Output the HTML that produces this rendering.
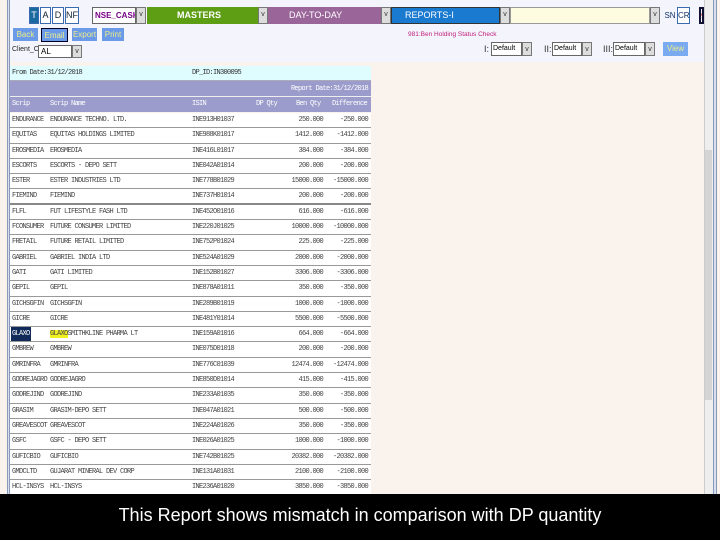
<!DOCTYPE html>
<html><head><meta charset="utf-8"><style>
*{margin:0;padding:0;box-sizing:border-box}
body{width:720px;height:540px;overflow:hidden;background:#faf2ec;position:relative;font-family:"Liberation Sans",sans-serif}
.abs{position:absolute}
.top{left:10px;top:0;width:694px;height:62px;background:#f4f4fc}
.lb{left:7px;top:0;width:3px;height:494px;border-left:1px solid #8898b8;border-right:1px solid #8898b8;background:#d8e0f0}
.rb{left:713px;top:0;width:4px;height:494px;border-left:1px solid #8898b8;border-right:1px solid #8898b8;background:#d8e0f0}
.sb{left:704px;top:0;width:9px;height:494px;background:#eeeeee;border-left:1px solid #ccc}
.thumb{left:705px;top:150px;width:7px;height:250px;background:#d4d4d4}
.t{font-family:"Liberation Sans Narrow","Liberation Sans",sans-serif;font-size:9px;line-height:15px;text-align:center;border:1px solid #3a6ab0;color:#123}
.sel{background:#fff;border:1px solid #666;font-size:9px;line-height:15px;font-family:"Liberation Sans Narrow","Liberation Sans",sans-serif;overflow:hidden;white-space:nowrap}
.arr{background:#ddd;border:1px solid #777;font-size:7px;text-align:center;line-height:14px;color:#333}
.btn{background:#6a9ae8;color:#ee8;font-size:8px;line-height:13px;text-align:center;font-family:"Liberation Sans Narrow",sans-serif}
.tb{left:10px;top:66px;width:361px;font-family:"Liberation Mono",monospace;font-size:7px;letter-spacing:-0.7px;color:#333}
.row{position:relative;width:361px;height:15.3px;border-bottom:1px solid #999;background:#fff;line-height:14px}
.row span{position:absolute;white-space:nowrap}
.cap{left:0;top:494px;width:720px;height:46px;background:#000;color:#fff;font-size:18px;text-align:center;line-height:42px}
</style></head><body>
<div class="abs top"></div>
<div class="abs lb"></div>
<div class="abs sb"></div><div class="abs thumb"></div>
<div class="abs rb"></div>

<div class="abs t" style="left:29px;top:7px;width:10px;height:17px;background:#1a6aa0;color:#fff">T</div>
<div class="abs t" style="left:40px;top:7px;width:11px;height:17px;background:#fff">A</div>
<div class="abs t" style="left:52px;top:7px;width:12px;height:17px;background:#fff">D</div>
<div class="abs t" style="left:65px;top:7px;width:14px;height:17px;background:#fff">NF</div>
<div class="abs sel" style="left:92px;top:7px;width:44px;height:17px;color:#708;padding-left:2px;font-size:8px;font-weight:bold">NSE_CASH</div>
<div class="abs arr" style="left:136px;top:7px;width:10px;height:17px">v</div>
<div class="abs" style="left:147px;top:7px;width:111px;height:17px;background:#5e9e14;color:#fff;font-size:9px;line-height:17px;padding-left:30px;font-weight:bold">MASTERS</div>
<div class="abs arr" style="left:258px;top:7px;width:10px;height:17px">v</div>
<div class="abs" style="left:268px;top:7px;width:113px;height:17px;background:#9a669a;color:#fff;font-size:9px;line-height:17px;padding-left:21px">DAY-TO-DAY</div>
<div class="abs arr" style="left:381px;top:7px;width:10px;height:17px">v</div>
<div class="abs" style="left:391px;top:7px;width:109px;height:17px;background:#1a7ad0;color:#fff;font-size:9px;line-height:15px;padding-left:13px;border:1px solid #333">REPORTS-I</div>
<div class="abs arr" style="left:500px;top:7px;width:10px;height:17px">v</div>
<div class="abs" style="left:510px;top:7px;width:140px;height:17px;background:#fdfce0;border:1px solid #999"></div>
<div class="abs arr" style="left:650px;top:7px;width:10px;height:17px">v</div>
<div class="abs t" style="left:664px;top:8px;width:12px;height:16px;border:none;background:none;color:#136;font-size:8px">SN</div>
<div class="abs t" style="left:677px;top:7px;width:13px;height:17px;background:#fff;color:#136;font-size:8px">CR</div>
<div class="abs t" style="left:699px;top:7px;width:5px;height:17px;background:#fff;border:2px solid #113;color:#c00;overflow:hidden">9</div>

<div class="abs btn" style="left:13px;top:28px;width:25px;height:13px">Back</div>
<div class="abs btn" style="left:41px;top:28px;width:27px;height:14px;border:1px solid #002">Email</div>
<div class="abs btn" style="left:72px;top:28px;width:25px;height:13px">Export</div>
<div class="abs btn" style="left:102px;top:28px;width:22px;height:13px">Print</div>
<div class="abs" style="left:12px;top:46px;font-size:7px;color:#222;font-family:'Liberation Sans Narrow',sans-serif">Client_C:</div>
<div class="abs sel" style="left:38px;top:45px;width:34px;height:13px;line-height:11px;padding-left:2px;font-size:8px">AL</div>
<div class="abs arr" style="left:72px;top:45px;width:10px;height:13px;line-height:11px">v</div>

<div class="abs" style="left:408px;top:31px;font-size:6.5px;color:#c0207a">981:Ben Holding Status Check</div>
<div class="abs" style="left:484px;top:44px;font-size:9px;color:#333">I:</div>
<div class="abs sel" style="left:491px;top:42px;width:31px;height:14px;line-height:12px;font-size:7px;padding-left:1px">Default</div>
<div class="abs arr" style="left:522px;top:42px;width:10px;height:14px">v</div>
<div class="abs" style="left:544px;top:44px;font-size:9px;color:#333">II:</div>
<div class="abs sel" style="left:552px;top:42px;width:30px;height:14px;line-height:12px;font-size:7px;padding-left:1px">Default</div>
<div class="abs arr" style="left:582px;top:42px;width:10px;height:14px">v</div>
<div class="abs" style="left:603px;top:44px;font-size:9px;color:#333">III:</div>
<div class="abs sel" style="left:613px;top:42px;width:32px;height:14px;line-height:12px;font-size:7px;padding-left:1px">Default</div>
<div class="abs arr" style="left:645px;top:42px;width:10px;height:14px">v</div>
<div class="abs btn" style="left:663px;top:42px;width:25px;height:14px;line-height:14px;background:#7aaaf0">View</div>

<div class="abs tb">
<div class="abs" style="left:0;top:0;width:361px;height:15px;background:#dffcff;border-bottom:1px solid #aab;line-height:15px"><span class="abs" style="left:2px">From Date:31/12/2018</span><span class="abs" style="left:182px">DP_ID:IN300095</span></div>
<div class="abs" style="left:0;top:15px;width:361px;height:16px;background:#9c9ccc;border-bottom:1px solid #eee;color:#fff;line-height:16px"><span class="abs" style="right:3px">Report Date:31/12/2018</span></div>
<div class="abs" style="left:0;top:31px;width:361px;height:15px;background:#9c9ccc;color:#fff;line-height:15px"><span class="abs" style="left:2px">Scrip</span><span class="abs" style="left:40px">Scrip Name</span><span class="abs" style="left:182px">ISIN</span><span class="abs" style="left:246px">DP Qty</span><span class="abs" style="left:286px">Ben Qty</span><span class="abs" style="left:322px">Difference</span></div>
</div>

<div class="abs" style="left:10px;top:113px;width:361px;font-family:'Liberation Mono',monospace;font-size:7px;letter-spacing:-0.7px;color:#444">
<div class="row"><span style="left:2px">ENDURANCE</span><span style="left:40px">ENDURANCE TECHNO. LTD.</span><span style="left:182px">INE913H01037</span><span style="right:48px">250.000</span><span style="right:3px">-250.000</span></div>
<div class="row"><span style="left:2px">EQUITAS</span><span style="left:40px">EQUITAS HOLDINGS LIMITED</span><span style="left:182px">INE988K01017</span><span style="right:48px">1412.000</span><span style="right:3px">-1412.000</span></div>
<div class="row"><span style="left:2px">EROSMEDIA</span><span style="left:40px">EROSMEDIA</span><span style="left:182px">INE416L01017</span><span style="right:48px">384.000</span><span style="right:3px">-384.000</span></div>
<div class="row"><span style="left:2px">ESCORTS</span><span style="left:40px">ESCORTS - DEPO SETT</span><span style="left:182px">INE042A01014</span><span style="right:48px">200.000</span><span style="right:3px">-200.000</span></div>
<div class="row"><span style="left:2px">ESTER</span><span style="left:40px">ESTER INDUSTRIES LTD</span><span style="left:182px">INE778B01029</span><span style="right:48px">15000.000</span><span style="right:3px">-15000.000</span></div>
<div class="row" style="border-bottom:2px solid #888"><span style="left:2px">FIEMIND</span><span style="left:40px">FIEMIND</span><span style="left:182px">INE737H01014</span><span style="right:48px">200.000</span><span style="right:3px">-200.000</span></div>
<div class="row"><span style="left:2px">FLFL</span><span style="left:40px">FUT LIFESTYLE FASH LTD</span><span style="left:182px">INE452O01016</span><span style="right:48px">616.000</span><span style="right:3px">-616.000</span></div>
<div class="row"><span style="left:2px">FCONSUMER</span><span style="left:40px">FUTURE CONSUMER LIMITED</span><span style="left:182px">INE220J01025</span><span style="right:48px">10000.000</span><span style="right:3px">-10000.000</span></div>
<div class="row"><span style="left:2px">FRETAIL</span><span style="left:40px">FUTURE RETAIL LIMITED</span><span style="left:182px">INE752P01024</span><span style="right:48px">225.000</span><span style="right:3px">-225.000</span></div>
<div class="row"><span style="left:2px">GABRIEL</span><span style="left:40px">GABRIEL INDIA LTD</span><span style="left:182px">INE524A01029</span><span style="right:48px">2000.000</span><span style="right:3px">-2000.000</span></div>
<div class="row"><span style="left:2px">GATI</span><span style="left:40px">GATI LIMITED</span><span style="left:182px">INE152B01027</span><span style="right:48px">3306.000</span><span style="right:3px">-3306.000</span></div>
<div class="row"><span style="left:2px">GEPIL</span><span style="left:40px">GEPIL</span><span style="left:182px">INE878A01011</span><span style="right:48px">350.000</span><span style="right:3px">-350.000</span></div>
<div class="row"><span style="left:2px">GICHSGFIN</span><span style="left:40px">GICHSGFIN</span><span style="left:182px">INE289B01019</span><span style="right:48px">1000.000</span><span style="right:3px">-1000.000</span></div>
<div class="row"><span style="left:2px">GICRE</span><span style="left:40px">GICRE</span><span style="left:182px">INE481Y01014</span><span style="right:48px">5500.000</span><span style="right:3px">-5500.000</span></div>
<div class="row"><span style="left:1px;background:#102a5a;color:#fff;padding:0 1px">GLAXO</span><span style="left:40px"><b style="background:#f0f020;font-weight:normal">GLAXO</b>SMITHKLINE PHARMA LT</span><span style="left:182px">INE159A01016</span><span style="right:48px">664.000</span><span style="right:3px">-664.000</span></div>
<div class="row"><span style="left:2px">GMBREW</span><span style="left:40px">GMBREW</span><span style="left:182px">INE075D01018</span><span style="right:48px">200.000</span><span style="right:3px">-200.000</span></div>
<div class="row"><span style="left:2px">GMRINFRA</span><span style="left:40px">GMRINFRA</span><span style="left:182px">INE776C01039</span><span style="right:48px">12474.000</span><span style="right:3px">-12474.000</span></div>
<div class="row"><span style="left:2px">GODREJAGRO</span><span style="left:40px">GODREJAGRO</span><span style="left:182px">INE850D01014</span><span style="right:48px">415.000</span><span style="right:3px">-415.000</span></div>
<div class="row"><span style="left:2px">GODREJIND</span><span style="left:40px">GODREJIND</span><span style="left:182px">INE233A01035</span><span style="right:48px">350.000</span><span style="right:3px">-350.000</span></div>
<div class="row"><span style="left:2px">GRASIM</span><span style="left:40px">GRASIM-DEPO SETT</span><span style="left:182px">INE047A01021</span><span style="right:48px">500.000</span><span style="right:3px">-500.000</span></div>
<div class="row"><span style="left:2px">GREAVESCOT</span><span style="left:40px">GREAVESCOT</span><span style="left:182px">INE224A01026</span><span style="right:48px">350.000</span><span style="right:3px">-350.000</span></div>
<div class="row"><span style="left:2px">GSFC</span><span style="left:40px">GSFC - DEPO SETT</span><span style="left:182px">INE026A01025</span><span style="right:48px">1000.000</span><span style="right:3px">-1000.000</span></div>
<div class="row"><span style="left:2px">GUFICBIO</span><span style="left:40px">GUFICBIO</span><span style="left:182px">INE742B01025</span><span style="right:48px">20382.000</span><span style="right:3px">-20382.000</span></div>
<div class="row"><span style="left:2px">GMDCLTD</span><span style="left:40px">GUJARAT MINERAL DEV CORP</span><span style="left:182px">INE131A01031</span><span style="right:48px">2100.000</span><span style="right:3px">-2100.000</span></div>
<div class="row"><span style="left:2px">HCL-INSYS</span><span style="left:40px">HCL-INSYS</span><span style="left:182px">INE236A01020</span><span style="right:48px">3850.000</span><span style="right:3px">-3850.000</span></div>
<div class="row"><span style="left:2px">HDFC</span><span style="left:40px">HDFC LTD- DEPO SETT.</span><span style="left:182px">INE001A01036</span><span style="right:48px">399.000</span><span style="right:3px">-399.000</span></div>
</div>

<div class="abs cap">This Report shows mismatch in comparison with DP quantity</div>
</body></html>
